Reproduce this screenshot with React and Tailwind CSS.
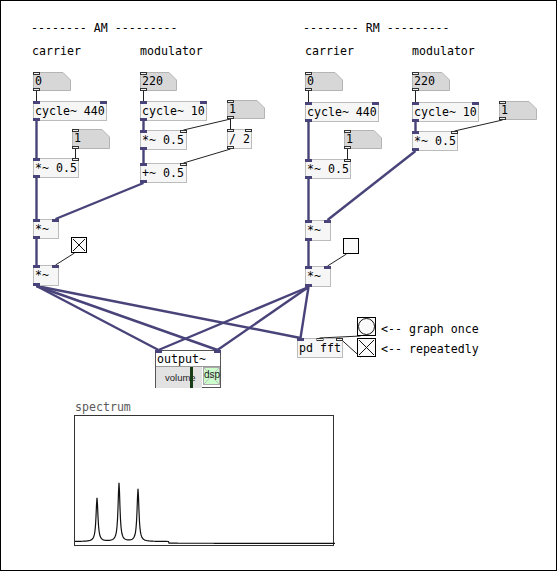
import React from 'react';

const SIG = '#48447a';

// node boxes on the patch canvas: [x, y, w, h]
const BOXES = {
  a0: [33, 72, 38, 19], aCyc: [33, 101, 74, 20], a1: [72, 129, 38, 20], aMul: [33, 158, 46, 20],
  a220: [140, 72, 37, 19], aCyc10: [140, 101, 67, 20], a1b: [227, 100, 38, 19], aMod: [140, 130, 47, 20],
  aDiv: [227, 129, 25, 20], aAdd: [140, 163, 47, 20], aM1: [33, 219, 26, 20], aTog: [71, 237, 16, 16],
  aM2: [33, 265, 26, 21],
  r0: [305, 72, 38, 19], rCyc: [305, 102, 74, 20], r1: [344, 130, 38, 19], rMul: [305, 159, 46, 20],
  r220: [412, 72, 38, 19], rCyc10: [412, 102, 67, 20], r1b: [499, 101, 38, 19], rMod: [412, 131, 46, 20],
  rM1: [305, 220, 26, 21], rTog: [343, 238, 16, 16], rM2: [305, 266, 26, 21],
  out: [155, 350, 66, 38], fft: [297, 338, 46, 20], bang: [357, 317, 19, 19], rep: [357, 338, 19, 19],
};

const outPt = (k) => { const [x, y, , h] = BOXES[k]; return [x + 3.5, y + h]; };
const inPt = (k, side = 'l') => {
  const [x, y, w] = BOXES[k];
  if (side === 'r') return [x + w - 3.5, y];
  if (side === 'm') return [x + w / 2 - 0.5, y];
  return [x + 3.5, y];
};

const SIGNAL_LINKS = [
  ['aCyc', 'aMul', 'l'], ['aMul', 'aM1', 'l'], ['aCyc10', 'aMod', 'l'], ['aMod', 'aAdd', 'l'],
  ['aAdd', 'aM1', 'r'], ['aM1', 'aM2', 'l'], ['aM2', 'out', 'l'], ['aM2', 'out', 'r'], ['aM2', 'fft', 'l'],
  ['rCyc', 'rMul', 'l'], ['rMul', 'rM1', 'l'], ['rCyc10', 'rMod', 'l'], ['rMod', 'rM1', 'r'],
  ['rM1', 'rM2', 'l'], ['rM2', 'out', 'l'], ['rM2', 'out', 'r'], ['rM2', 'fft', 'l'],
];

const CONTROL_LINKS = [
  ['a0', 'aCyc', 'l'], ['a1', 'aMul', 'r'], ['a220', 'aCyc10', 'l'], ['a1b', 'aMod', 'r'],
  ['a1b', 'aDiv', 'l'], ['aDiv', 'aAdd', 'r'], ['aTog', 'aM2', 'r'],
  ['r0', 'rCyc', 'l'], ['r1', 'rMul', 'r'], ['r220', 'rCyc10', 'l'], ['r1b', 'rMod', 'r'],
  ['rTog', 'rM2', 'r'], ['bang', 'fft', 'm'], ['rep', 'fft', 'r'],
];

const place = (id) => { const [x, y, w, h] = BOXES[id]; return { left: x, top: y, width: w, height: h }; };

function Port({ signal, className }) {
  return (
    <div className={`absolute w-[7px] h-[3px] ${signal ? 'bg-[#48447a]' : 'border border-[#333] bg-[#f0f0f0]'} ${className}`} />
  );
}

function Obj({ id, text, inlets = [], outlet = 'sig' }) {
  const pos = {
    l: '-left-px -top-px',
    r: '-right-px -top-px',
    m: 'left-1/2 -translate-x-1/2 -top-px',
  };
  return (
    <div className="absolute bg-[#f6f6f6] border border-[#bcbcbc]" style={place(id)}>
      <span className="absolute left-px top-[2px] font-['DejaVu_Sans_Mono',monospace] text-[11.6px] leading-[14px] text-black whitespace-pre">{text}</span>
      {inlets.map((p, i) => <Port key={i} signal={p.s} className={pos[p.at]} />)}
      {outlet && <Port signal={outlet === 'sig'} className="-left-px -bottom-px" />}
    </div>
  );
}

function NumBox({ id, value }) {
  const [, , w, h] = BOXES[id];
  return (
    <div className="absolute" style={place(id)}>
      <svg width={w} height={h} className="absolute left-0 top-0">
        <polygon points={`0.5,0.5 ${w - 8},0.5 ${w - 0.5},8 ${w - 0.5},${h - 0.5} 0.5,${h - 0.5}`} fill="#d7d7d7" stroke="#b4b4b4" />
      </svg>
      <span className="absolute left-[2px] top-[2px] font-['DejaVu_Sans_Mono',monospace] text-[11.6px] leading-[14px] text-black">{value}</span>
      <Port className="left-0 top-0" />
      <Port className="left-0 bottom-0" />
    </div>
  );
}

function Toggle({ id, on }) {
  const [, , w, h] = BOXES[id];
  return (
    <div className="absolute bg-[#fafafa] border border-black" style={place(id)}>
      {on && (
        <svg width={w - 2} height={h - 2} className="absolute left-0 top-0">
          <line x1="1" y1="1" x2={w - 3} y2={h - 3} stroke="#111" />
          <line x1={w - 3} y1="1" x2="1" y2={h - 3} stroke="#111" />
        </svg>
      )}
    </div>
  );
}

function Bang({ id }) {
  const [, , w, h] = BOXES[id];
  return (
    <div className="absolute bg-[#fafafa] border border-black" style={place(id)}>
      <svg width={w - 2} height={h - 2} className="absolute left-0 top-0">
        <circle cx={(w - 2) / 2} cy={(h - 2) / 2} r={(w - 2) / 2 - 0.5} fill="none" stroke="#111" />
      </svg>
    </div>
  );
}

function Spectrum() {
  const W = 260;
  const H = 131;
  const peaks = [[22, 43.5], [44, 58.5], [63, 52.5]];
  const pts = [];
  for (let i = 0; i <= W * 2; i++) {
    const x = i / 2;
    let y = x < 94 ? 125.6 : 127.3;
    for (const [c, a] of peaks) y -= a / (1 + ((x - c) / 1.15) ** 2);
    pts.push(`${x.toFixed(1)},${y.toFixed(2)}`);
  }
  return (
    <div className="absolute left-[74px] top-[400px] flex flex-col">
      <span className="pl-px font-['DejaVu_Sans_Mono',monospace] text-[11.6px] leading-[15px] text-[#5a5a5a]">spectrum</span>
      <div className="relative w-[260px] h-[131px] border border-[#333] bg-white">
        <svg width={W - 2} height={H - 2} className="absolute left-0 top-0 overflow-visible">
          <polyline points={pts.join(' ')} fill="none" stroke="#111" strokeWidth="1.2" />
        </svg>
      </div>
    </div>
  );
}

function OutputGop() {
  return (
    <div className="absolute flex flex-col bg-white border border-[#555]" style={place('out')}>
      <span className="h-[15px] pl-px pt-px font-['DejaVu_Sans_Mono',monospace] text-[11.6px] leading-[14px] text-black">output~</span>
      <div className="flex items-start border-t border-[#999]">
        <div className="relative w-[46px] h-[21px] bg-[#e2e2e2]">
          <span className="absolute left-[9px] top-[5px] font-['Liberation_Sans',sans-serif] text-[9.5px] leading-[12px] text-[#222]">volume</span>
          <div className="absolute left-[34px] top-0 w-[3px] h-[21px] bg-[#173d17]" />
        </div>
        <div className="relative ml-px w-[17px] h-[18px] bg-[#ccffcc] border border-[#aaa]">
          <svg width="15" height="16" className="absolute left-0 top-0">
            <line x1="0" y1="0" x2="15" y2="16" stroke="#bbb" />
            <line x1="15" y1="0" x2="0" y2="16" stroke="#bbb" />
          </svg>
          <span className="absolute left-0 top-px font-['Liberation_Sans',sans-serif] text-[10px] leading-[12px] text-[#222]">dsp</span>
        </div>
      </div>
      <Port signal className="-left-px -top-px" />
      <Port signal className="-right-px -top-px" />
    </div>
  );
}

function Section({ title, className, children }) {
  return (
    <div className={`absolute top-[21px] flex flex-col gap-[9px] font-['DejaVu_Sans_Mono',monospace] text-[11.6px] leading-[14px] text-black whitespace-pre ${className}`}>
      <span>{title}</span>
      {children}
    </div>
  );
}

export default function App() {
  const sig2 = [{ s: true, at: 'l' }, { s: true, at: 'r' }];
  const sigCtl = [{ s: true, at: 'l' }, { s: false, at: 'r' }];
  return (
    <div className="relative w-[557px] h-[571px] bg-white border border-black overflow-hidden">
      <div className="absolute -left-px -top-px w-[557px] h-[571px]">
        <svg width="557" height="571" className="absolute left-0 top-0">
          {SIGNAL_LINKS.map(([a, b, s], i) => {
            const [x1, y1] = outPt(a);
            const [x2, y2] = inPt(b, s);
            return <line key={i} x1={x1} y1={y1} x2={x2} y2={y2} stroke={SIG} strokeWidth="2.4" />;
          })}
          {CONTROL_LINKS.map(([a, b, s], i) => {
            const [x1, y1] = outPt(a);
            const [x2, y2] = inPt(b, s);
            return <line key={i} x1={x1} y1={y1} x2={x2} y2={y2} stroke="#222" strokeWidth="1" />;
          })}
        </svg>

        <Section title="-------- AM ---------" className="left-[31px]">
          <div className="flex pl-px">
            <span className="w-[108px]">carrier</span>
            <span>modulator</span>
          </div>
        </Section>
        <Section title="-------- RM ---------" className="left-[303px]">
          <div className="flex pl-[2px]">
            <span className="w-[107px]">carrier</span>
            <span>modulator</span>
          </div>
        </Section>

        <NumBox id="a0" value="0" />
        <Obj id="aCyc" text="cycle~ 440" inlets={sig2} />
        <NumBox id="a1" value="1" />
        <Obj id="aMul" text="*~ 0.5" inlets={sigCtl} />
        <NumBox id="a220" value="220" />
        <Obj id="aCyc10" text="cycle~ 10" inlets={sig2} />
        <NumBox id="a1b" value="1" />
        <Obj id="aMod" text="*~ 0.5" inlets={sigCtl} />
        <Obj id="aDiv" text="/ 2" inlets={[{ s: false, at: 'l' }, { s: false, at: 'r' }]} outlet="ctl" />
        <Obj id="aAdd" text="+~ 0.5" inlets={sigCtl} />
        <Obj id="aM1" text="*~" inlets={sig2} />
        <Toggle id="aTog" on />
        <Obj id="aM2" text="*~" inlets={sig2} />

        <NumBox id="r0" value="0" />
        <Obj id="rCyc" text="cycle~ 440" inlets={sig2} />
        <NumBox id="r1" value="1" />
        <Obj id="rMul" text="*~ 0.5" inlets={sigCtl} />
        <NumBox id="r220" value="220" />
        <Obj id="rCyc10" text="cycle~ 10" inlets={sig2} />
        <NumBox id="r1b" value="1" />
        <Obj id="rMod" text="*~ 0.5" inlets={sigCtl} />
        <Obj id="rM1" text="*~" inlets={sig2} />
        <Toggle id="rTog" />
        <Obj id="rM2" text="*~" inlets={sig2} />

        <OutputGop />
        <Obj id="fft" text="pd fft" inlets={[{ s: true, at: 'l' }, { s: false, at: 'm' }, { s: false, at: 'r' }]} outlet={null} />
        <Bang id="bang" />
        <Toggle id="rep" on />
        <div className="absolute left-[381px] top-[322px] flex flex-col gap-[6px] font-['DejaVu_Sans_Mono',monospace] text-[11.6px] leading-[14px] text-black whitespace-pre">
          <span>{'<-- graph once'}</span>
          <span>{'<-- repeatedly'}</span>
        </div>

        <Spectrum />
      </div>
    </div>
  );
}
